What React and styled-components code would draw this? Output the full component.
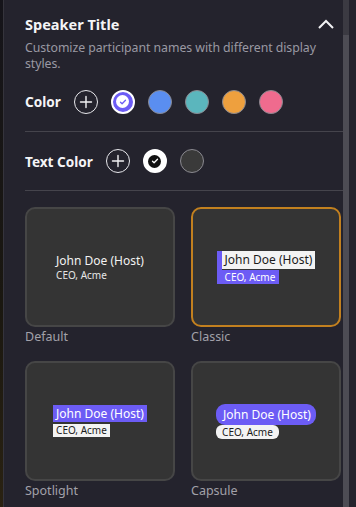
import styled, { createGlobalStyle } from "styled-components";

const Global = createGlobalStyle`
  html, body { margin: 0; padding: 0; background: #24232d; }
  body { font-family: "Noto Sans", "Open Sans", sans-serif; }
`;

const Frame = styled.div`
  display: flex;
  width: 356px;
  height: 507px;
  overflow: hidden;
  background: #24232d;
`;

const Edge = styled.div`
  width: 3px;
  flex-shrink: 0;
  background: linear-gradient(#15141a, #1a1710 60%, #2a2212);
  border-right: 1px solid #35343c;
`;

const Panel = styled.div`
  flex: 1;
  padding: 14px 0 0 21px;
  box-sizing: border-box;
`;

const Header = styled.div`
  display: flex;
  align-items: center;
  justify-content: space-between;
  padding-right: 8px;
  height: 20px;
`;

const Title = styled.h2`
  margin: 0;
  font-size: 14.5px;
  font-weight: 700;
  color: #f4f4f6;
`;

const Desc = styled.p`
  margin: 6px 0 0;
  font-size: 12.3px;
  line-height: 16px;
  color: #9a99a3;
  letter-spacing: -0.05px;
`;

const Row = styled.div`
  display: flex;
  align-items: center;
  gap: 13px;
  height: ${(p) => p.$h}px;
  border-bottom: 1px solid #45444c;
`;

const Label = styled.span`
  font-size: 13.6px;
  font-weight: 700;
  color: #f4f4f6;
  margin-right: 0;
`;

const Swatch = styled.div`
  width: 24px;
  height: 24px;
  border-radius: 50%;
  box-sizing: border-box;
  background: ${(p) => p.$c || "transparent"};
  border: ${(p) => (p.$sel ? "2px solid #fff" : p.$add ? "1px solid #e8e8ec" : "1px solid #8a8990")};
  display: flex;
  align-items: center;
  justify-content: center;
  flex-shrink: 0;
`;

const Inner = styled.div`
  width: 13px;
  height: 13px;
  border-radius: 50%;
  background: ${(p) => p.$bg};
  display: flex;
  align-items: center;
  justify-content: center;
`;

const Grid = styled.div`
  display: grid;
  grid-template-columns: 150px 150px;
  column-gap: 16px;
  padding-top: 16px;
`;

const Tile = styled.div`
  display: flex;
  flex-direction: column;
`;

const Card = styled.div`
  height: 120px;
  box-sizing: border-box;
  border-radius: 10px;
  background: #343434;
  border: 2px solid ${(p) => (p.$sel ? "#c2801f" : "#464646")};
  display: flex;
  align-items: center;
  justify-content: center;
`;

const CardLabel = styled.div`
  font-size: 12.5px;
  color: #a2a1a9;
  height: 34px;
  line-height: 20px;
`;

const Stack = styled.div`
  display: flex;
  flex-direction: column;
  align-items: flex-start;
`;

const Name = styled.span`
  font-size: 12px;
  line-height: ${(p) => p.$lh || 16}px;
  color: ${(p) => p.$fg};
  background: ${(p) => p.$bg || "transparent"};
  padding: ${(p) => p.$pad || "0"};
  border-radius: ${(p) => p.$r || 0}px;
`;

const Sub = styled.span`
  font-size: 10px;
  line-height: ${(p) => p.$lh || 12}px;
  color: ${(p) => p.$fg};
  background: ${(p) => p.$bg || "transparent"};
  padding: ${(p) => p.$pad || "0"};
  margin-top: ${(p) => p.$mt || 0}px;
  border-radius: ${(p) => p.$r || 0}px;
`;

const ClassicBox = styled(Stack)`
  border-left: 5px solid #6c5cf5;
`;

const Scroll = styled.div`
  width: 6px;
  flex-shrink: 0;
  background: #3b3a42;
  margin-right: 7px;
  display: flex;
  flex-direction: column;
`;

const Thumb = styled.div`
  margin-top: 35px;
  flex: 1;
  background: #4d4c54;
`;

const Plus = () => (
  <svg width="14" height="14" viewBox="0 0 14 14">
    <path d="M7 1.5v11M1.5 7h11" stroke="#f2f2f4" strokeWidth="1.4" strokeLinecap="round" />
  </svg>
);

const Check = ({ c }) => (
  <svg width="8" height="8" viewBox="0 0 8 8">
    <path d="M1.5 4.2l1.6 1.6 3.4-3.6" fill="none" stroke={c} strokeWidth="1.3" strokeLinecap="round" strokeLinejoin="round" />
  </svg>
);

const purple = "#6c5cf5";
const colors = ["#5a8ef0", "#5bb6bd", "#eea03e", "#ef6b8e"];

export default function App() {
  return (
    <Frame>
      <Global />
      <Edge />
      <Panel>
        <Header>
          <Title>Speaker Title</Title>
          <svg width="18" height="12" viewBox="0 0 18 12">
            <path d="M2 10l7-7 7 7" fill="none" stroke="#f2f2f4" strokeWidth="2" />
          </svg>
        </Header>
        <Desc>Customize participant names with different display styles.</Desc>
        <Row $h={59}>
          <Label>Color</Label>
          <Swatch $add><Plus /></Swatch>
          <Swatch $sel $c={purple}>
            <Inner $bg="#fff"><Check c={purple} /></Inner>
          </Swatch>
          {colors.map((c) => (
            <Swatch key={c} $c={c} />
          ))}
        </Row>
        <Row $h={58}>
          <Label>Text Color</Label>
          <Swatch $add><Plus /></Swatch>
          <Swatch $sel $c="#fff">
            <Inner $bg="#111"><Check c="#fff" /></Inner>
          </Swatch>
          <Swatch $c="#3a3a3a" />
        </Row>
        <Grid>
          <Tile>
            <Card>
              <Stack>
                <Name $fg="#f2f2f2">John Doe (Host)</Name>
                <Sub $fg="#e6e6e6">CEO, Acme</Sub>
              </Stack>
            </Card>
            <CardLabel>Default</CardLabel>
          </Tile>
          <Tile>
            <Card $sel>
              <ClassicBox>
                <Name $fg="#1b1b1b" $bg="#f3f3f3" $pad="1px 3px" $lh={16}>John Doe (Host)</Name>
                <Sub $fg="#fff" $bg={purple} $pad="1px 4px 1px 3px" $mt={1}>CEO, Acme</Sub>
              </ClassicBox>
            </Card>
            <CardLabel>Classic</CardLabel>
          </Tile>
          <Tile>
            <Card>
              <Stack>
                <Name $fg="#fff" $bg={purple} $pad="0 3px" $lh={17}>John Doe (Host)</Name>
                <Sub $fg="#1b1b1b" $bg="#f3f3f3" $pad="0 3px" $mt={2} $lh={13}>CEO, Acme</Sub>
              </Stack>
            </Card>
            <CardLabel>Spotlight</CardLabel>
          </Tile>
          <Tile>
            <Card>
              <Stack>
                <Name $fg="#fff" $bg={purple} $pad="1px 5px 1px 7px" $lh={19} $r={9}>John Doe (Host)</Name>
                <Sub $fg="#1b1b1b" $bg="#f3f3f3" $pad="1px 6px" $lh={12} $r={6}>CEO, Acme</Sub>
              </Stack>
            </Card>
            <CardLabel>Capsule</CardLabel>
          </Tile>
        </Grid>
      </Panel>
      <Scroll>
        <Thumb />
      </Scroll>
    </Frame>
  );
}
